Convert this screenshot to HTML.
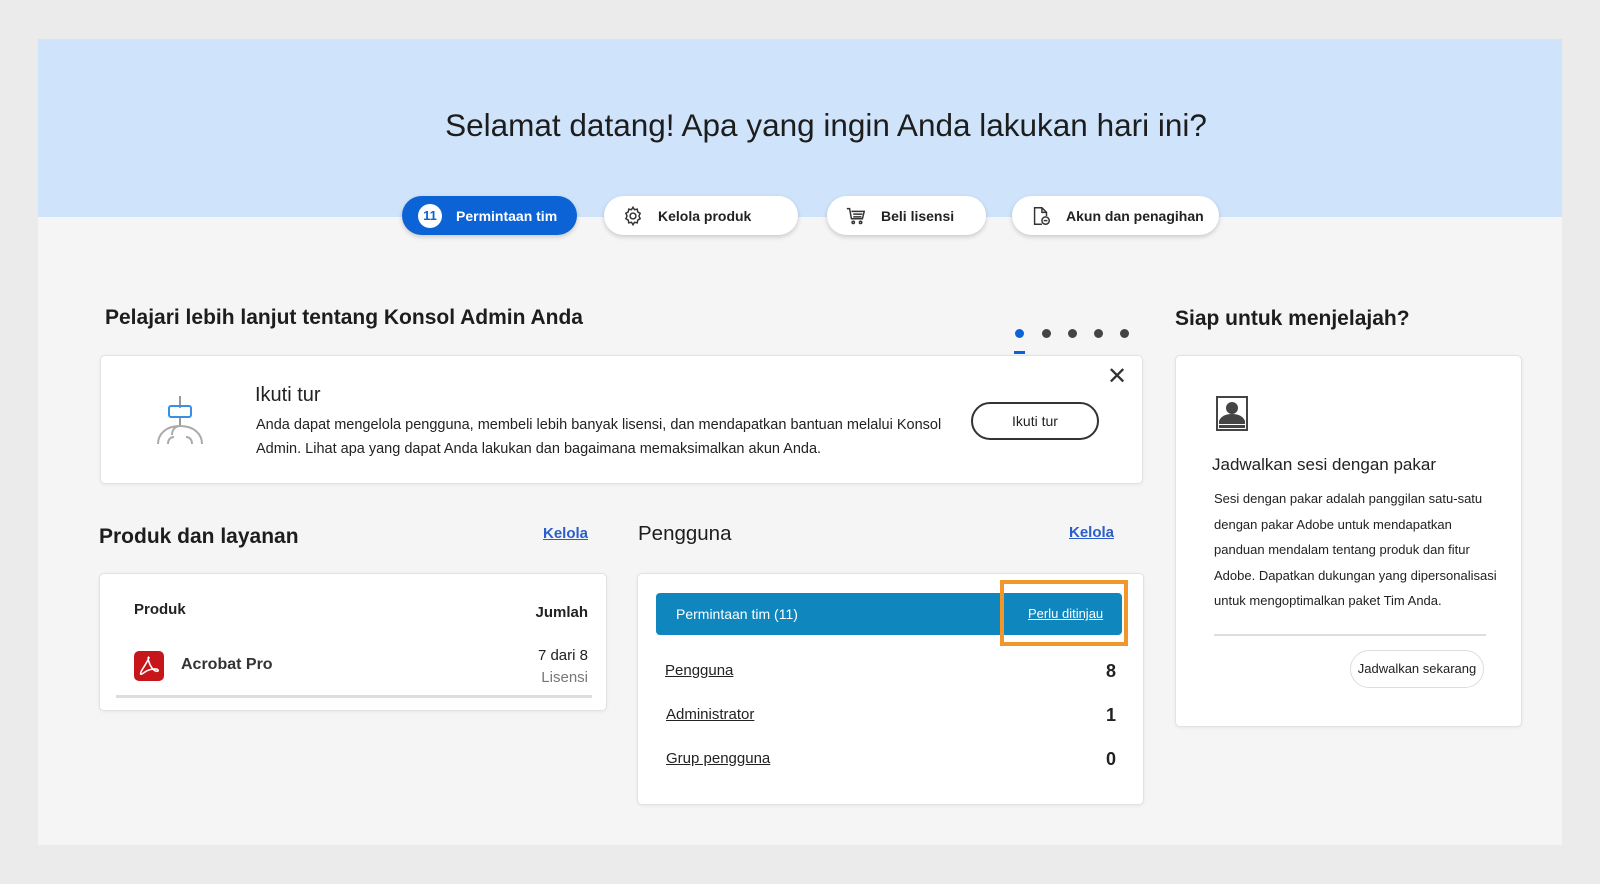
<!DOCTYPE html>
<html><head><meta charset="utf-8"><style>
*{box-sizing:border-box;margin:0;padding:0}
body{width:1600px;height:884px;background:#ebebeb;font-family:"Liberation Sans",Arial,sans-serif;color:#222;position:relative;overflow:hidden}
.abs{position:absolute}
#panel{left:38px;top:39px;width:1524px;height:806px;background:#f5f5f5}
#hero{left:38px;top:39px;width:1524px;height:178px;background:#cfe3fb}
h1{position:absolute;left:0;width:1652px;top:107px;text-align:center;font-size:31.5px;font-weight:normal;color:#1d1d1d}
.pill{position:absolute;top:196px;height:39px;border-radius:20px;background:#fff;box-shadow:0 2px 5px rgba(0,0,0,.18);font-size:14px;font-weight:bold;display:flex;align-items:center;padding-left:18px}
.pill svg{margin-right:14px}
.card{position:absolute;background:#fff;border:1px solid #e2e2e2;border-radius:5px;box-shadow:0 1px 3px rgba(0,0,0,.06)}
.h2{position:absolute;font-size:21px;font-weight:bold;color:#1d1d1d}
.lnk{position:absolute;font-size:15px;font-weight:bold;color:#2b5ec9;text-decoration:underline}
.dot{position:absolute;top:329px;width:9px;height:9px;border-radius:50%;background:#444}
.row{position:absolute;left:666px;font-size:15px;text-decoration:underline;color:#222}
.num{position:absolute;left:1100px;width:16px;text-align:right;font-size:18px;font-weight:bold}
</style></head><body>
<div class="abs" id="panel"></div>
<div class="abs" id="hero"></div>
<h1>Selamat datang! Apa yang ingin Anda lakukan hari ini?</h1>

<div class="pill" style="left:402px;width:175px;background:#0b63d6;color:#fff;padding-left:16px">
<span style="width:24px;height:24px;border-radius:50%;background:#fff;color:#0b63d6;font-size:13px;display:inline-flex;align-items:center;justify-content:center;margin-right:14px">11</span>Permintaan tim</div>
<div class="pill" style="left:604px;width:194px"><svg width="22" height="22" viewBox="0 0 24 24" fill="none" stroke="#333" stroke-width="1.6"><circle cx="12" cy="12" r="3.2"/><path d="M12 2.5l1.6 2.6 3-.6.6 3 2.6 1.6-1.3 2.9 1.3 2.9-2.6 1.6-.6 3-3-.6L12 21.5l-1.6-2.6-3 .6-.6-3-2.6-1.6L5.5 12 4.2 9.1l2.6-1.6.6-3 3 .6z"/></svg>Kelola produk</div>
<div class="pill" style="left:827px;width:159px"><svg width="22" height="22" viewBox="0 0 24 24" fill="none" stroke="#333" stroke-width="1.6"><path d="M2 4h3l2 11h12l2-8H7"/><path d="M9 10h10M9 13h9"/><circle cx="9" cy="19" r="1.3"/><circle cx="17" cy="19" r="1.3"/></svg>Beli lisensi</div>
<div class="pill" style="left:1012px;width:207px"><svg width="22" height="22" viewBox="0 0 24 24" fill="none" stroke="#333" stroke-width="1.6"><path d="M13 21H5V3h8l5 5v4"/><path d="M13 3v5h5"/><circle cx="17" cy="17" r="4"/><path d="M15 17h4"/></svg>Akun dan penagihan</div>

<div class="h2" style="left:105px;top:306px">Pelajari lebih lanjut tentang Konsol Admin Anda</div>
<div class="dot" style="left:1015px;background:#0b63d6"></div>
<div class="dot" style="left:1042px"></div><div class="dot" style="left:1068px"></div><div class="dot" style="left:1094px"></div><div class="dot" style="left:1120px"></div>
<div class="abs" style="left:1014px;top:351px;width:11px;height:3px;background:#0b63d6"></div>

<div class="card" style="left:100px;top:355px;width:1043px;height:129px">
<svg class="abs" style="left:52px;top:38px" width="54" height="54" viewBox="0 0 54 54" fill="none" stroke-width="2"><path d="M27 2v12M27 24v8" stroke="#999"/><rect x="16" y="12" width="22" height="11" rx="2" stroke="#3a8ee6"/><path d="M5 50c0-10 8-18 22-18s22 8 22 18" stroke="#aaa"/><path d="M27 32c-5 0-8 4-8 9" stroke="#aaa"/><path d="M15 50c0-5 3-7 6-7M39 50c0-5-3-7-6-7" stroke="#aaa"/></svg>
<div class="abs" style="left:154px;top:28px;font-size:20px">Ikuti tur</div>
<div class="abs" style="left:155px;top:57px;font-size:14.5px;line-height:24px;width:700px">Anda dapat mengelola pengguna, membeli lebih banyak lisensi, dan mendapatkan bantuan melalui Konsol Admin. Lihat apa yang dapat Anda lakukan dan bagaimana memaksimalkan akun Anda.</div>
<div class="abs" style="left:870px;top:46px;width:128px;height:38px;border:2px solid #333;border-radius:19px;font-size:14px;text-align:center;line-height:34px">Ikuti tur</div>
<div class="abs" style="left:1006px;top:6px;font-size:24px;color:#333">✕</div>
</div>

<div class="h2" style="left:1175px;top:307px">Siap untuk menjelajah?</div>
<div class="card" style="left:1175px;top:355px;width:347px;height:372px">
<svg class="abs" style="left:40px;top:40px" width="32" height="35" viewBox="0 0 32 35"><rect x="1" y="1" width="30" height="33" fill="#fff" stroke="#444" stroke-width="2"/><circle cx="16" cy="12" r="6" fill="#444"/><path d="M3 25c2-5 7-7 13-7s11 2 13 7v3H3z" fill="#444"/><rect x="3" y="29" width="26" height="3" fill="#444"/></svg>
<div class="abs" style="left:36px;top:99px;font-size:17px">Jadwalkan sesi dengan pakar</div>
<div class="abs" style="left:38px;top:130px;font-size:13px;line-height:25.5px;width:290px">Sesi dengan pakar adalah panggilan satu-satu dengan pakar Adobe untuk mendapatkan panduan mendalam tentang produk dan fitur Adobe. Dapatkan dukungan yang dipersonalisasi untuk mengoptimalkan paket Tim Anda.</div>
<div class="abs" style="left:38px;top:278px;width:272px;height:2px;background:#ddd"></div>
<div class="abs" style="left:174px;top:294px;width:134px;height:38px;border:1.5px solid #ddd;border-radius:19px;font-size:13px;text-align:center;line-height:35px">Jadwalkan sekarang</div>
</div>

<div class="h2" style="left:99px;top:525px">Produk dan layanan</div>
<div class="lnk" style="left:543px;top:525px">Kelola</div>
<div class="card" style="left:99px;top:573px;width:508px;height:138px">
<div class="abs" style="left:34px;top:27px;font-size:15px;font-weight:bold">Produk</div>
<div class="abs" style="right:18px;top:30px;font-size:15px;font-weight:bold">Jumlah</div>
<div class="abs" style="left:34px;top:77px;width:30px;height:30px;border-radius:5px;background:#c7161a"><svg width="30" height="30" viewBox="0 0 30 30" fill="none" stroke="#fff" stroke-width="1.6"><path d="M15 6c-2 0 0 7 3 11s7 4 6 2-9-1-13 2-5 3-4 0 8-12 8-15"/></svg></div>
<div class="abs" style="left:81px;top:82px;font-size:16px;font-weight:bold;color:#333">Acrobat Pro</div>
<div class="abs" style="right:18px;top:71px;font-size:15px;text-align:right;line-height:22px">7 dari 8<br><span style="color:#777">Lisensi</span></div>
<div class="abs" style="left:16px;top:121px;width:476px;height:3px;background:#ddd"></div>
</div>

<div class="abs" style="left:638px;top:522px;font-size:20.5px;color:#1d1d1d">Pengguna</div>
<div class="lnk" style="left:1069px;top:524px">Kelola</div>
<div class="card" style="left:637px;top:573px;width:507px;height:232px"></div>
<div class="abs" style="left:656px;top:593px;width:466px;height:42px;background:#0f86be;border-radius:4px;color:#fff;font-size:14px;line-height:42px;padding-left:20px">Permintaan tim (11)</div>
<div class="abs" style="left:1000px;top:580px;width:128px;height:66px;border:4px solid #f0962a"></div>
<div class="abs" style="left:1028px;top:606px;color:#fff;font-size:13px;text-decoration:underline">Perlu ditinjau</div>
<div class="row" style="top:662px;left:665px">Pengguna</div><div class="num" style="top:661px">8</div>
<div class="row" style="top:706px">Administrator</div><div class="num" style="top:705px">1</div>
<div class="row" style="top:750px">Grup pengguna</div><div class="num" style="top:749px">0</div>
</body></html>
